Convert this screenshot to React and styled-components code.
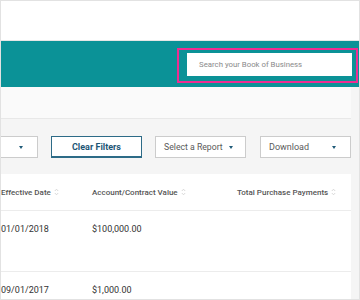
import React from "react";
import styled, { createGlobalStyle } from "styled-components";

const Global = createGlobalStyle`
  html, body { margin: 0; padding: 0; background: #ffffff; }
  body { font-family: Roboto, "Liberation Sans", Arial, sans-serif; }
  * { box-sizing: border-box; }
`;

const Frame = styled.div`
  width: 360px;
  height: 300px;
  border: 1px solid #e2e2e2;
  background: #f5f5f5;
  overflow: hidden;
  display: flex;
  flex-direction: column;
`;

const TopBar = styled.div`
  height: 40px;
  flex-shrink: 0;
  background: #ffffff;
  border-bottom: 1px solid #e6e6e6;
`;

const Banner = styled.div`
  height: 46px;
  flex-shrink: 0;
  background: #0b9297;
  display: flex;
  justify-content: flex-end;
  align-items: flex-start;
  padding: 7px 1px 0 0;
`;

const Highlight = styled.div`
  border: 2px solid #ee2d92;
  padding: 3px 4px 5px 8px;
  display: flex;
`;

const SearchInput = styled.div`
  width: 165px;
  height: 23px;
  background: #ffffff;
  display: flex;
  align-items: center;
  padding-left: 12px;
  font-size: 7.8px;
  color: #8a8a8a;
  white-space: nowrap;
`;

const Body = styled.div`
  flex: 1;
  display: flex;
  min-height: 0;
`;

const Main = styled.div`
  width: 350px;
  flex-shrink: 0;
  display: flex;
  flex-direction: column;
`;

const FilterPanel = styled.div`
  height: 32px;
  flex-shrink: 0;
  background: #fafafa;
  border-bottom: 1px solid #e8e8e8;
`;

const Controls = styled.div`
  margin-top: 17px;
  height: 22px;
  flex-shrink: 0;
  display: flex;
  justify-content: flex-end;
  gap: 13px;
  overflow: hidden;
`;

const Select = styled.div`
  width: 91px;
  height: 22px;
  flex-shrink: 0;
  background: #ffffff;
  border: 1px solid #cccccc;
  display: flex;
  align-items: center;
  justify-content: space-between;
  padding: 0 ${(p) => p.$padRight}px 0 8px;
  font-size: ${(p) => p.$size}px;
  color: #5a5a5a;
  white-space: nowrap;
  margin-left: ${(p) => (p.$extraGap ? "1px" : "0")};
`;

const Caret = styled.span`
  width: 0;
  height: 0;
  border-left: 2px solid transparent;
  border-right: 2px solid transparent;
  border-top: 3px solid #1f5a78;
`;

const ClearButton = styled.div`
  width: 91px;
  height: 22px;
  flex-shrink: 0;
  background: #ffffff;
  border: 1px solid #2d6b87;
  border-bottom-width: 2px;
  display: flex;
  align-items: center;
  justify-content: center;
  font-size: 9px;
  font-weight: 700;
  color: #1d5675;
  white-space: nowrap;
`;

const Table = styled.div`
  margin-top: 16px;
  background: #ffffff;
  flex: 1;
`;

const Row = styled.div`
  display: grid;
  grid-template-columns: 91px 145px 1fr;
  height: ${(p) => p.$h}px;
  align-items: ${(p) => (p.$head ? "center" : "start")};
  padding-top: ${(p) => (p.$head ? "0" : "13px")};
  border-bottom: 1px solid #ececec;
`;

const HeadCell = styled.div`
  display: flex;
  align-items: center;
  gap: 3px;
  font-size: 8px;
  font-weight: 500;
  color: #555555;
  white-space: nowrap;
`;

const Cell = styled.div`
  font-size: 9px;
  color: #333333;
  white-space: nowrap;
`;

const Side = styled.div`
  flex: 1;
  background: #f5f5f5;
`;

const SortIcon = () => (
  <svg width="5" height="8" viewBox="0 0 5 8" fill="none" stroke="#cfcfcf" strokeWidth="0.8">
    <path d="M0.8 3 L2.5 1.2 L4.2 3" />
    <path d="M0.8 5 L2.5 6.8 L4.2 5" />
  </svg>
);

export default function App() {
  return (
    <>
      <Global />
      <Frame>
        <TopBar />
        <Banner>
          <Highlight>
            <SearchInput>Search your Book of Business</SearchInput>
          </Highlight>
        </Banner>
        <Body>
          <Main>
            <FilterPanel />
            <Controls>
              <Select $size={9} $padRight={14}>
                <span />
                <Caret />
              </Select>
              <ClearButton>Clear Filters</ClearButton>
              <Select $size={8.7} $padRight={12}>
                <span>Select a Report</span>
                <Caret />
              </Select>
              <Select $extraGap $size={9} $padRight={14}>
                <span>Download</span>
                <Caret />
              </Select>
            </Controls>
            <Table>
              <Row $head $h={37}>
                <HeadCell>
                  Effective Date <SortIcon />
                </HeadCell>
                <HeadCell>
                  Account/Contract Value <SortIcon />
                </HeadCell>
                <HeadCell>
                  Total Purchase Payments <SortIcon />
                </HeadCell>
              </Row>
              <Row $h={61}>
                <Cell>01/01/2018</Cell>
                <Cell>$100,000.00</Cell>
                <Cell />
              </Row>
              <Row $h={61}>
                <Cell>09/01/2017</Cell>
                <Cell>$1,000.00</Cell>
                <Cell />
              </Row>
            </Table>
          </Main>
          <Side />
        </Body>
      </Frame>
    </>
  );
}
